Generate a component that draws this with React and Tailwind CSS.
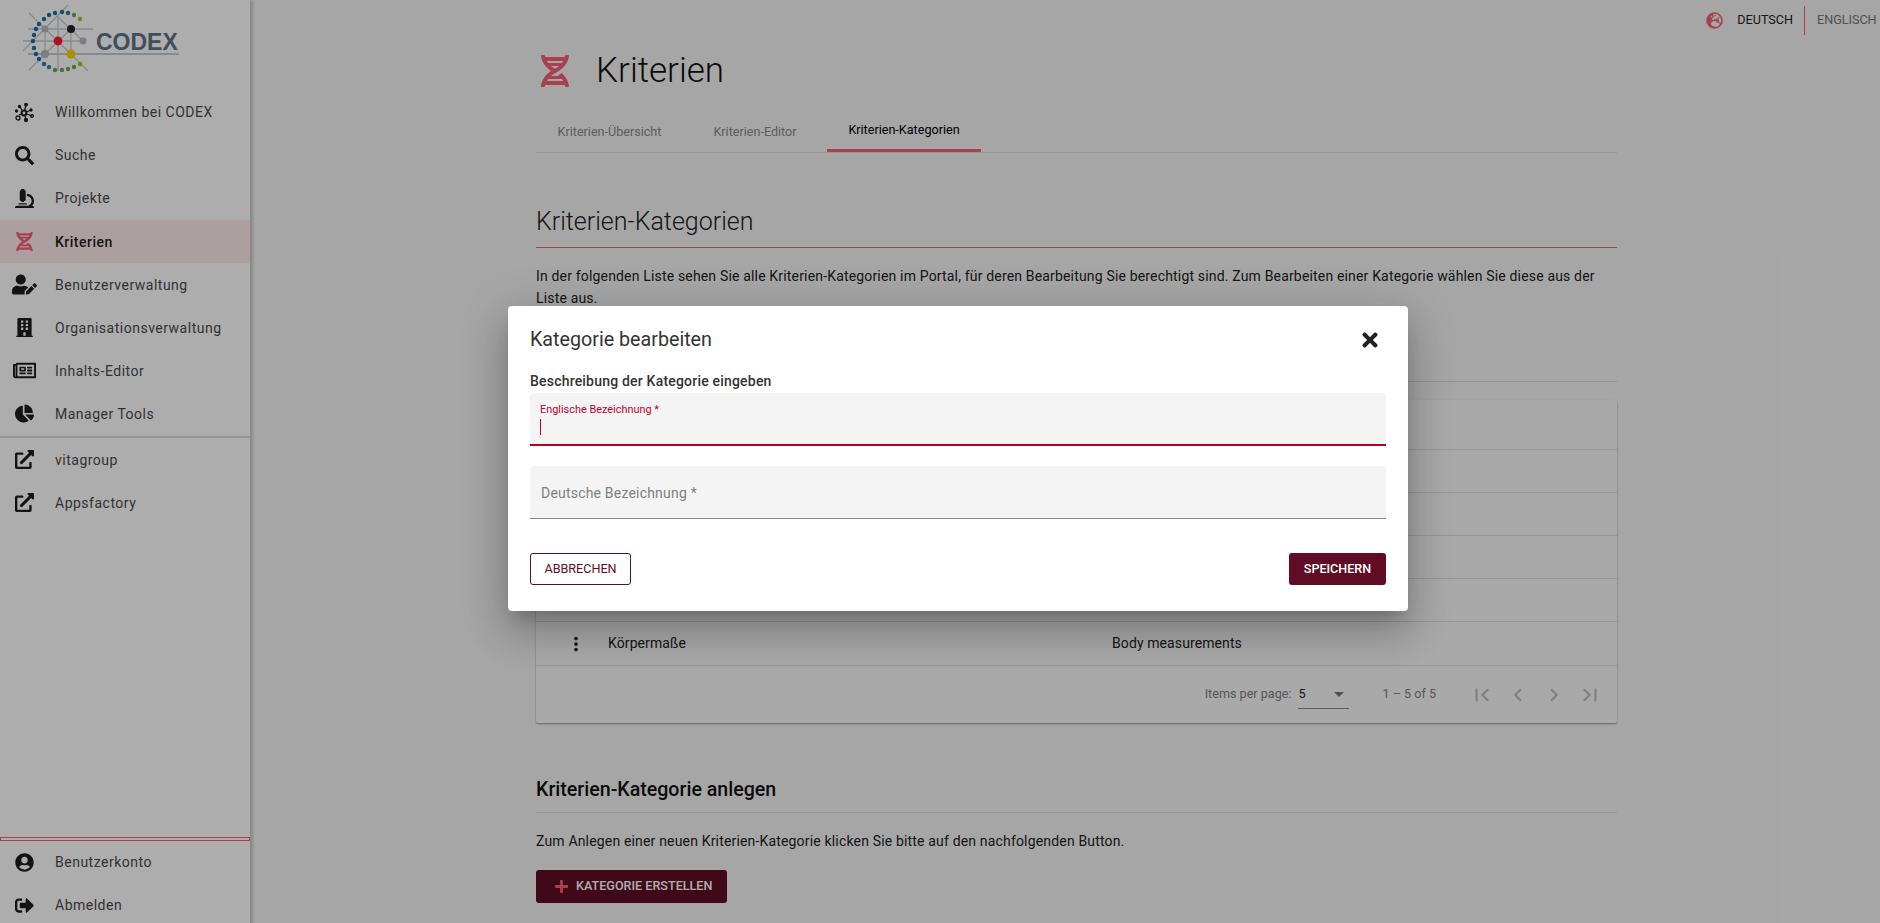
import React from 'react';
import {
  FaDna, FaSearch, FaMicroscope, FaUserEdit, FaBuilding, FaRegNewspaper, FaChartPie,
  FaUserCircle, FaSignOutAlt, FaGlobeEurope, FaTimes, FaPlus, FaExternalLinkAlt,
} from 'react-icons/fa';
import { MdMoreVert, MdFirstPage, MdLastPage, MdChevronLeft, MdChevronRight } from 'react-icons/md';

const MoleculeIcon = () => (
  <svg width="19" height="20" viewBox="0 0 19 20" fill="none" stroke="currentColor" strokeWidth="1.3">
    <path d="M9 10 5 4M9 10l7-3M9 10l8 3M9 10l-5 2M9 10l2 6M9 10l2-8" />
    <circle cx="9" cy="10" r="2.4" strokeWidth="2" fill="#fff" />
    <circle cx="11" cy="1.6" r="1.3" fill="currentColor" />
    <circle cx="4.5" cy="3.5" r="1.1" fill="currentColor" />
    <circle cx="16" cy="7" r="1" fill="currentColor" />
    <circle cx="17" cy="13" r="1.4" />
    <circle cx="3" cy="15" r="2" />
    <circle cx="11" cy="17" r="1.5" fill="currentColor" />
    <circle cx="1.5" cy="8" r="1" fill="currentColor" />
  </svg>
);

const Logo = () => {
  const dots = [
    [80, 19, '#9cc23c'], [74, 15, '#6fa84a'], [68, 13, '#2a7fa0'], [62, 12, '#1a6fa8'], [55, 13, '#1a6fa8'],
    [49, 15, '#1a6fa8'], [44, 19, '#1a6fa8'], [39, 24, '#1a6fa8'], [36, 29, '#1a6fa8'], [34, 35, '#1a6fa8'],
    [33, 41, '#1a6fa8'], [34, 48, '#1a6fa8'], [36, 54, '#1a6fa8'], [39, 59, '#1a6fa8'], [44, 64, '#2a7fa0'],
    [49, 67, '#3a8f90'], [55, 70, '#6fa84a'], [62, 70, '#6fa84a'], [68, 69, '#6fa84a'], [74, 67, '#6fa84a'], [80, 64, '#9cc23c'],
  ];
  return (
    <svg width="190" height="80" viewBox="0 0 190 80">
      <g stroke="#c8ccd0" fill="none">
        <path strokeWidth="1.3" d="M28 29h65M23 41h60M58 14v57M29 13l59 58M68 5 23 51M29 70l25-25M45 29v25M71 29v25M45 29l26 25M71 29 45 54M58 17l25 24" />
        <path strokeWidth="2" d="M28 54h151" />
      </g>
      {dots.map(([x, y, c]) => <circle key={`${x}-${y}`} cx={x} cy={y} r="2.2" fill={c} />)}
      <circle cx="45" cy="29" r="3.6" fill="#b4bcc4" />
      <circle cx="71" cy="29" r="4" fill="#222" />
      <circle cx="83" cy="41" r="3.4" fill="#b4bcc4" />
      <circle cx="58" cy="41" r="4.4" fill="#ff1a2a" />
      <circle cx="45" cy="54" r="4.2" fill="#b4bcc4" />
      <circle cx="71" cy="54" r="4.5" fill="#ffd400" />
      <text x="96" y="50" fontFamily="Liberation Sans, sans-serif" fontWeight="700" fontSize="23" fill="#5f7486">CODEX</text>
    </svg>
  );
};

const NavItem = ({ icon, label, active, low }) => (
  <div className={`flex items-center h-[43px] pl-[14px] shrink-0 ${active ? 'bg-[#feeaea]' : ''}`}>
    <span className={`w-[20px] flex justify-center text-[19px] ${active ? 'text-[#f85f75]' : 'text-[#1c1c1c]'}`}>{icon}</span>
    <span className={`ml-[21px] text-[14px] tracking-[0.5px] ${low ? 'mt-px' : ''} ${active ? 'font-medium text-[#222]' : 'text-[#4b4b4b]'}`}>{label}</span>
  </div>
);

const tabs = [
  { label: 'Kriterien-Übersicht', cls: 'w-[147px] mr-[9px] text-[#8a8a8a]' },
  { label: 'Kriterien-Editor', cls: 'w-[126px] mr-[9px] text-[#8a8a8a]' },
  { label: 'Kriterien-Kategorien', cls: 'w-[154px] text-black border-b-[3px] border-[#f85f75]' },
];

const App = () => {
  return (
    <div className="relative h-screen overflow-hidden flex bg-[#f5f5f5] font-['Roboto',sans-serif] text-[14px] text-[#222]">
      {/* Sidebar */}
      <aside className="w-[250px] h-[927px] shrink-0 flex flex-col bg-white shadow-[3px_0_2px_rgba(0,0,0,0.16)]">
        <div className="h-[91px] shrink-0"><Logo /></div>
        <NavItem icon={<MoleculeIcon />} label="Willkommen bei CODEX" />
        <NavItem icon={<FaSearch />} label="Suche" />
        <NavItem icon={<FaMicroscope />} label="Projekte" />
        <NavItem icon={<FaDna />} label="Kriterien" active low />
        <NavItem icon={<FaUserEdit className="shrink-0 text-[25px]" />} label="Benutzerverwaltung" low />
        <NavItem icon={<FaBuilding />} label="Organisationsverwaltung" low />
        <NavItem icon={<FaRegNewspaper className="shrink-0 text-[23px]" />} label="Inhalts-Editor" low />
        <NavItem icon={<FaChartPie />} label="Manager Tools" low />
        <div className="h-[2px] mt-[1px] bg-[#dcdcdc] shrink-0" />
        <NavItem icon={<FaExternalLinkAlt />} label="vitagroup" low />
        <NavItem icon={<FaExternalLinkAlt />} label="Appsfactory" low />
        <div className="mt-auto h-[4px] border border-[#f85f75] shrink-0" />
        <NavItem icon={<FaUserCircle />} label="Benutzerkonto" />
        <NavItem icon={<FaSignOutAlt />} label="Abmelden" />
      </aside>

      {/* Main */}
      <main className="flex-1 min-w-0">
        <div className="flex justify-end items-center h-[37px] pt-[3px] text-[12.6px]">
          <FaGlobeEurope className="text-[17px] text-[#f85f75]" />
          <span className="ml-[14px] text-[#222]">DEUTSCH</span>
          <span className="ml-[11px] w-px h-[29px] bg-[#f85f75]" />
          <span className="ml-[12px] w-[63px] text-[#777] whitespace-nowrap">ENGLISCH</span>
        </div>

        <div className="ml-[286px] w-[1081px]">
          <div className="flex items-center h-[50px] mt-[9px] pl-[3px]">
            <FaDna className="text-[32px] text-[#f85f75]" />
            <h1 className="ml-[25px] text-[35px] font-light text-[#111]">Kriterien</h1>
          </div>
          <div className="flex h-[50px] mt-[7px] border-b border-[#dedede]">
            {tabs.map(t => (
              <div key={t.label} className={`flex items-center justify-center pt-[9px] text-[12.6px] ${t.cls}`}>{t.label}</div>
            ))}
          </div>

          <h2 className="mt-[53px] text-[25px] font-light leading-[32px] text-[#222]">Kriterien-Kategorien</h2>
          <div className="mt-[9px] h-px bg-[#f85f75]" />
          <p className="mt-[17px] text-[14px] leading-[22px] tracking-[0.17px]">
            In der folgenden Liste sehen Sie alle Kriterien-Kategorien im Portal, für deren Bearbeitung Sie berechtigt sind. Zum Bearbeiten einer Kategorie wählen Sie diese aus der Liste aus.
          </p>
          <div className="mt-[72px] h-px bg-[#d8d8d8]" />

          {/* Table */}
          <div className="mt-[18px] bg-[#fafafa] rounded-[2px] shadow-[0_1px_2px_rgba(0,0,0,0.4)]">
            <div className="h-[50px] border-b border-[#dcdcdc]" />
            <div className="h-[43px] border-b border-[#dcdcdc]" />
            <div className="h-[43px] border-b border-[#dcdcdc]" />
            <div className="h-[43px] border-b border-[#dcdcdc]" />
            <div className="h-[43px] border-b border-[#dcdcdc]" />
            <div className="h-[44px] flex items-center border-b border-[#dcdcdc] tracking-[0.1px]">
              <MdMoreVert className="ml-[29px] text-[22px] text-[#222]" />
              <span className="ml-[21px] w-[504px]">Körpermaße</span>
              <span>Body measurements</span>
            </div>
            <div className="h-[57px] flex items-center justify-end text-[12.6px] text-[#808080]">
              <span>Items per page:</span>
              <div className="ml-[7px] w-[51px] h-[28px] flex items-center justify-between border-b border-[#888] text-[#222] pr-[5px]">
                <span>5</span>
                <span className="w-0 h-0 border-x-[5px] border-x-transparent border-t-[5px] border-t-[#777]" />
              </div>
              <span className="ml-[33px] mr-[33px]">1 – 5 of 5</span>
              <div className="flex text-[26px] text-[#bdbdbd] mr-[14px]">
                <MdFirstPage className="mr-[10px]" />
                <MdChevronLeft className="mr-[10px]" />
                <MdChevronRight className="mr-[10px]" />
                <MdLastPage />
              </div>
            </div>
          </div>

          <h3 className="mt-[54px] text-[19.6px] font-medium leading-[26px] text-[#111]">Kriterien-Kategorie anlegen</h3>
          <div className="mt-[9px] h-px bg-[#dcdcdc]" />
          <p className="mt-[17px] leading-[23px] tracking-[0.17px]">Zum Anlegen einer neuen Kriterien-Kategorie klicken Sie bitte auf den nachfolgenden Button.</p>
          <button className="mt-[17px] w-[191px] h-[33px] flex items-center pl-[18px] bg-[#5f0c26] rounded-[3px] text-[12.6px] font-medium text-white">
            <FaPlus className="text-[15px] text-[#f85f75]" />
            <span className="ml-[7px]">KATEGORIE ERSTELLEN</span>
          </button>
        </div>
      </main>

      {/* Dialog backdrop */}
      <div className="absolute inset-0 bg-black/32" />
      <div className="absolute left-[508px] top-[306px] w-[900px] h-[305px] px-[22px] bg-white rounded-[4px] shadow-[0_11px_15px_-7px_rgba(0,0,0,0.2),0_24px_38px_3px_rgba(0,0,0,0.14),0_9px_46px_8px_rgba(0,0,0,0.12)]">
        <div className="flex items-center justify-between h-[68px]">
          <h2 className="text-[19.7px] leading-[28px] text-[#333]">Kategorie bearbeiten</h2>
          <FaTimes className="mr-[5px] text-[22px] text-[#222]" />
        </div>
        <div className="h-[19px] -mt-[2px] mb-[2px] text-[14px] font-medium tracking-[0.2px] leading-[19px] text-[#333]">Beschreibung der Kategorie eingeben</div>
        <div className="h-[53px] bg-[#f4f4f4] rounded-t-[4px] border-b-2 border-[#b8001f] px-[10px] pt-[10px]">
          <div className="text-[10.9px] leading-[14px] text-[#c0002a]">Englische Bezeichnung *</div>
          <div className="mt-[2px] w-px h-[16px] bg-[#b8001f]" />
        </div>
        <div className="mt-[20px] h-[53px] flex items-center bg-[#f4f4f4] rounded-t-[4px] border-b border-[#888] pl-[11px] pt-[3px] text-[14px] tracking-[0.2px] text-[#808080]">
          Deutsche Bezeichnung *
        </div>
        <div className="mt-[34px] flex justify-between">
          <button className="w-[101px] h-[32px] border border-[#5f0c26] rounded-[3px] text-[12.6px] text-[#5f0c26]">ABBRECHEN</button>
          <button className="w-[97px] h-[32px] bg-[#5f0c24] rounded-[3px] text-[12.6px] font-medium text-white">SPEICHERN</button>
        </div>
      </div>
    </div>
  );
};

export default App;
